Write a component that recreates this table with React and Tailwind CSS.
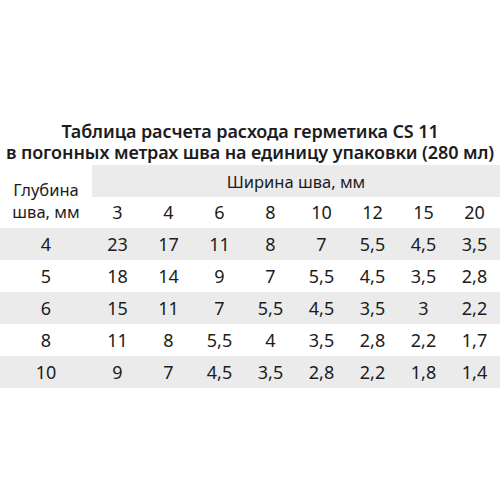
const widths = [3, 4, 6, 8, 10, 12, 15, 20];

const rows = [
  { depth: "4", values: ["23", "17", "11", "8", "7", "5,5", "4,5", "3,5"] },
  { depth: "5", values: ["18", "14", "9", "7", "5,5", "4,5", "3,5", "2,8"] },
  { depth: "6", values: ["15", "11", "7", "5,5", "4,5", "3,5", "3", "2,2"] },
  { depth: "8", values: ["11", "8", "5,5", "4", "3,5", "2,8", "2,2", "1,7"] },
  { depth: "10", values: ["9", "7", "4,5", "3,5", "2,8", "2,2", "1,8", "1,4"] },
];

export default function App() {
  return (
    <div className="w-[500px] h-[500px] bg-white pt-[121px] text-[#1c1c1c] font-['Noto_Sans',sans-serif]">
      <div className="text-center font-semibold text-[18px] leading-[21px] tracking-[-0.1px]">
        <div>Таблица расчета расхода герметика CS 11</div>
        <div>в погонных метрах шва на единицу упаковки (280 мл)</div>
      </div>

      <div className="mt-[2px] grid grid-cols-[92px_repeat(8,1fr)] text-[18px]">
        <div className="row-span-2 flex flex-col items-center justify-center pt-[8px] leading-[22px] text-[16.5px]">
          <span>Глубина</span>
          <span>шва, мм</span>
        </div>
        <div className="col-span-8 h-8 bg-[#ebebeb] flex items-center justify-center text-[16.5px] pt-[2px]">
          Ширина шва, мм
        </div>
        {widths.map((w) => (
          <div key={w} className="h-[31px] flex items-center justify-center">
            {w}
          </div>
        ))}
      </div>

      <div className="text-[18px]">
        {rows.map((row, i) => (
          <div
            key={row.depth}
            className={
              "grid grid-cols-[92px_repeat(8,1fr)] h-8 items-center " +
              (i % 2 === 0 ? "bg-[#ebebeb]" : "bg-white")
            }
          >
            <div className="text-center">{row.depth}</div>
            {row.values.map((v, j) => (
              <div key={j} className="text-center">
                {v}
              </div>
            ))}
          </div>
        ))}
      </div>
    </div>
  );
}
